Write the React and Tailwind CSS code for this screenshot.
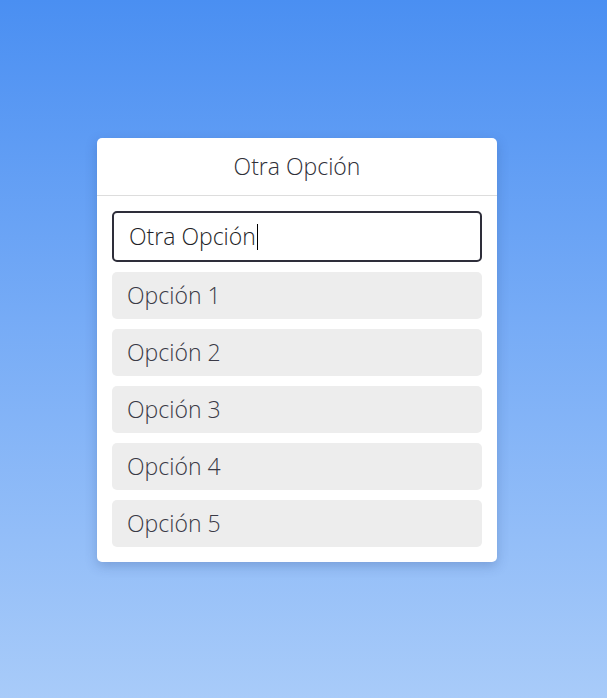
import React from "react";

const options = ["Opción 1", "Opción 2", "Opción 3", "Opción 4", "Opción 5"];

export default function App() {
  const value = "Otra Opción";

  return (
    <div
      className="min-h-[698px] w-full bg-gradient-to-b from-[#4a8ff2] to-[#a8cbf9] pt-[138px]"
      style={{ fontFamily: '"Open Sans", "Noto Sans", sans-serif' }}
    >
      <div className="ml-[97px] w-[400px] bg-white rounded-[5px] shadow-[0_4px_12px_rgba(30,60,120,0.25)]">
        <div className="h-[58px] flex items-center justify-center border-b border-[#dddddd] text-[23px] font-light text-[#2f2f38]">
          {value}
        </div>
        <div className="p-[15px] flex flex-col gap-[10px]">
          {/* focused text field with caret */}
          <div className="h-[51px] flex items-center border-2 border-[#2e2e3a] rounded-[5px] px-[15px] text-[23px] font-light text-[#1f1f28]">
            <span>{value}</span>
            <span className="inline-block w-px h-[26px] bg-black ml-px" />
          </div>
          {options.map((o) => (
            <div
              key={o}
              className="h-[47px] flex items-center px-[15px] bg-[#ededed] rounded-[5px] text-[23px] font-light text-[#3a3a46]"
            >
              {o}
            </div>
          ))}
        </div>
      </div>
    </div>
  );
}
